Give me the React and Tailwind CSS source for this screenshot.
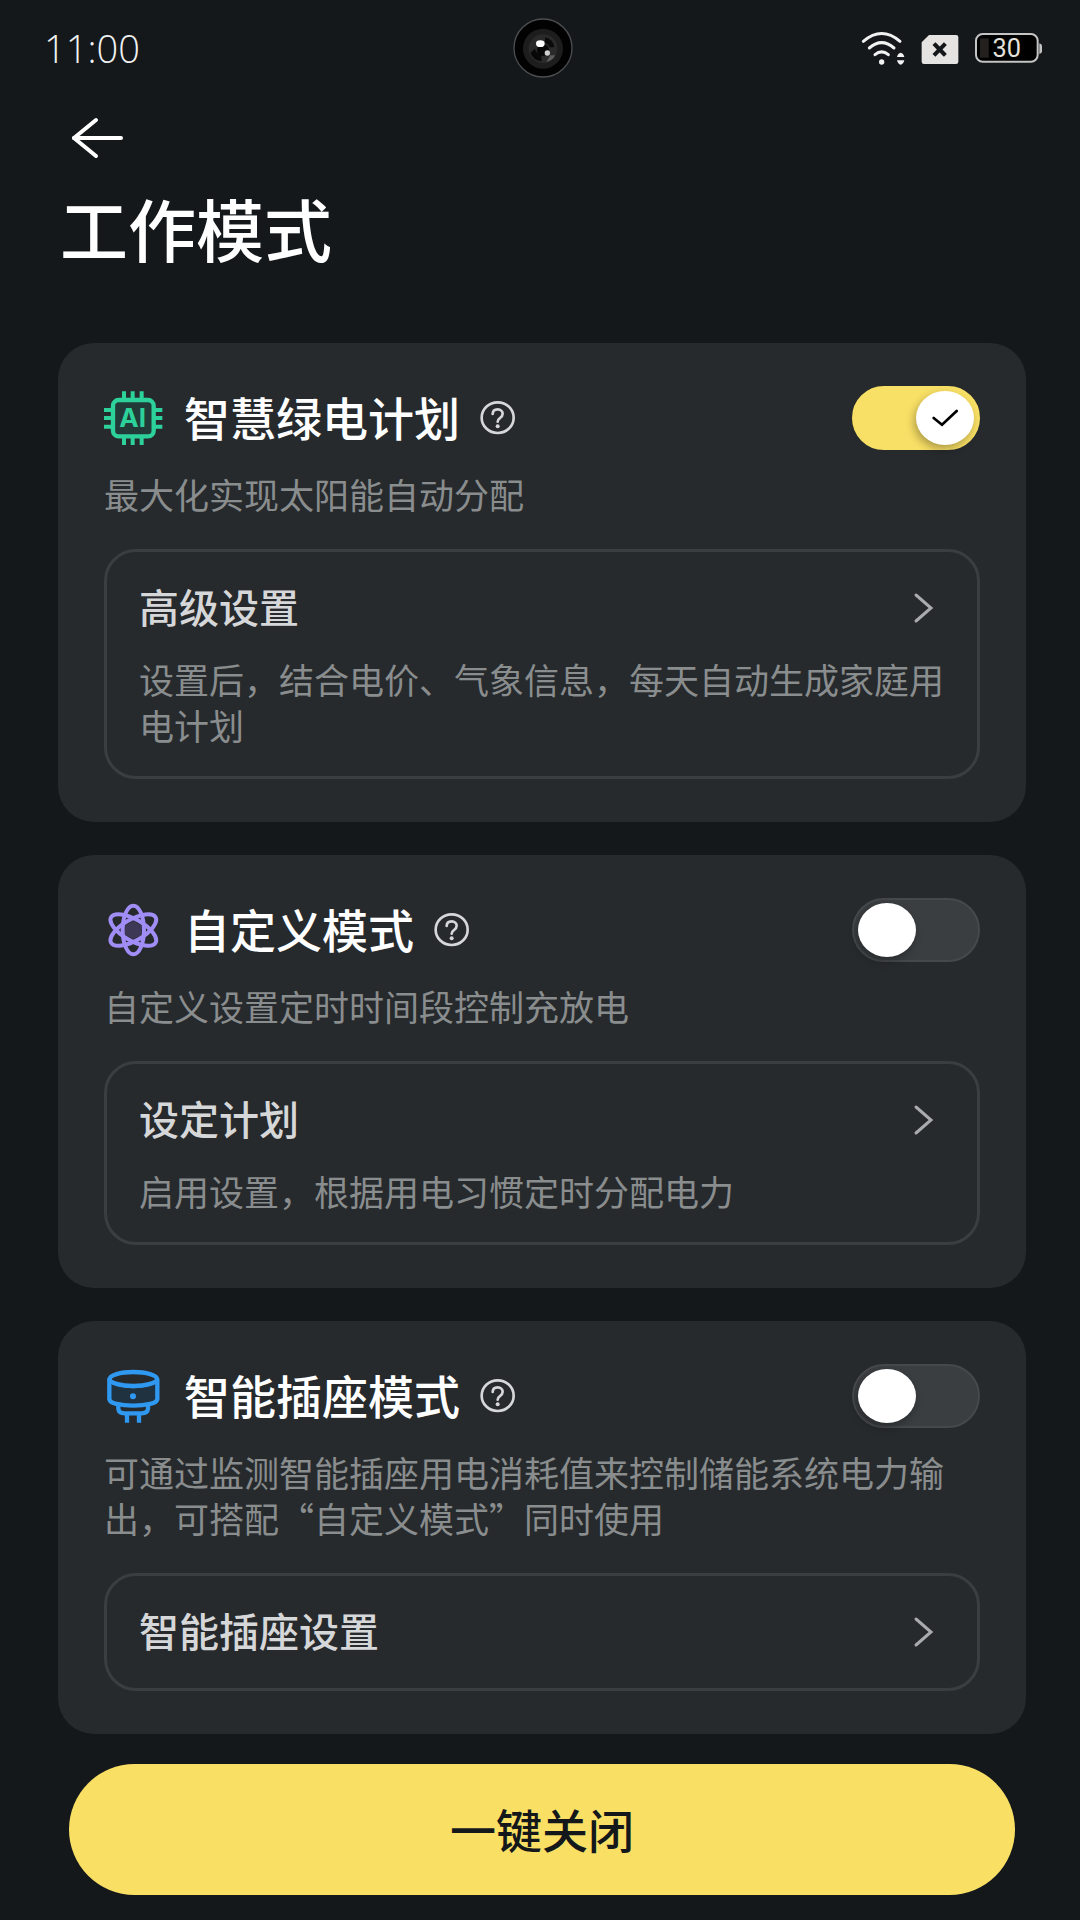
import React, { useState } from 'react';

// ─── Status bar icons ─────────────────────────────────────────────
const WifiIcon = () => (
  <svg viewBox="66 60 132 108" className="w-11 h-9 overflow-visible" fill="none" stroke="#f1f2f2" strokeLinecap="round" aria-hidden="true">
    <path d="M73 94 Q128 47 183 94" strokeWidth="9" />
    <path d="M91 114 Q128 82 165 114" strokeWidth="9" />
    <path d="M108 134 Q128 117 148 134" strokeWidth="9" />
    <circle cx="128" cy="156" r="8" fill="#f1f2f2" stroke="none" />
    <path d="M174 141 Q177 129 185 128 Q193 129 196 141 Z" fill="#f1f2f2" stroke="none" />
    <path d="M174 151 Q177 163 185 164 Q193 163 196 151 Z" fill="#f1f2f2" stroke="none" />
  </svg>
);

const SimIcon = () => (
  <svg viewBox="243 60 114 108" className="w-[38px] h-9" aria-hidden="true">
    <path d="M267 75 H348 Q355 75 355 82 V155 Q355 162 348 162 H252 Q245 162 245 155 V97 Z" fill="#e6e3e3" />
    <path d="M286 105 L312 132 M312 105 L286 132" stroke="#14181b" strokeWidth="12" strokeLinecap="square" />
  </svg>
);

const BatteryIcon = () => (
  <svg viewBox="405 60 201 108" className="w-[67px] h-9" aria-hidden="true">
    <rect x="408" y="72" width="185" height="83" rx="20" fill="#000" stroke="#c4c4c4" strokeWidth="6" />
    <path d="M420 85 H446 V143 H420 Z" fill="#242020" />
    <path d="M598 100 Q606 102 606 108 V124 Q606 130 598 132 Z" fill="#c4c4c4" />
    <text x="500" y="142" textAnchor="middle" fill="#e4e0da" className="font-['Roboto',sans-serif] text-[76px]">30</text>
  </svg>
);

const CameraLens = () => (
  <svg viewBox="0 0 180 180" className="size-[60px]" aria-hidden="true">
    <circle cx="90" cy="90" r="87" fill="#020202" stroke="#4b4e50" strokeWidth="4" />
    <circle cx="90" cy="92" r="60" fill="#1e1d1d" />
    <circle cx="90" cy="92" r="43" fill="#2b2a2a" />
    <path d="M52 104 A40 40 0 0 0 86 130 L84 108 A20 20 0 0 1 66 92 Z" fill="#080808" />
    <path d="M96 58 A36 36 0 0 1 124 88 L110 88 A22 22 0 0 0 96 74 Z" fill="#0a0a0a" />
    <circle cx="90" cy="96" r="18" fill="#070707" />
    <path d="M100 132 Q120 128 126 112 L112 112 Z" fill="#5c5c5c" />
    <ellipse cx="82" cy="77" rx="13" ry="10" fill="#fff" />
    <circle cx="103" cy="105" r="8" fill="#cfcfcf" />
  </svg>
);

// ─── Mode icons ───────────────────────────────────────────────────
const ChipIcon = () => (
  <svg viewBox="42 58 168 168" className="size-14 shrink-0 overflow-visible" aria-hidden="true">
    <rect x="69" y="88" width="122" height="109" rx="17" fill="#233b38" stroke="#2dd29b" strokeWidth="13" />
    <path
      d="M102 62V84 M128 62V84 M155 62V84 M102 201V223 M128 201V223 M155 201V223
         M42 118H65 M42 142H65 M42 168H65 M195 118H217 M195 142H217 M195 168H217"
      stroke="#2dd29b" strokeWidth="12"
    />
    <text x="128" y="170" textAnchor="middle" fill="#2dd29b" className="font-['Inter',sans-serif] text-[78px] font-bold">AI</text>
  </svg>
);

const AtomIcon = () => (
  <svg viewBox="0 0 168 168" className="size-14 shrink-0" aria-hidden="true">
    <path d="M88 57 L113 71 V98 L88 112 L63 98 V71 Z" fill="#3d3856" />
    <g fill="none" stroke="#a08df5" strokeWidth="12">
      <ellipse cx="88" cy="84" rx="32" ry="73" />
      <ellipse cx="88" cy="84" rx="32" ry="77" transform="rotate(60 88 84)" />
      <ellipse cx="88" cy="84" rx="32" ry="77" transform="rotate(120 88 84)" />
    </g>
  </svg>
);

const SocketIcon = () => (
  <svg viewBox="42 54 168 168" className="size-14 shrink-0" fill="none" stroke="#2f98f0" strokeWidth="13" strokeLinejoin="round" aria-hidden="true">
    <path d="M58 88 V148 Q60 157 76 161 Q102 167 130 167 Q158 167 184 161 Q200 157 202 148 V88 Q180 108 130 108 Q80 108 58 88 Z" fill="#20313f" />
    <ellipse cx="130" cy="87" rx="71" ry="21" fill="#262a2d" />
    <path d="M85 168 V176 Q86 190 104 190 H154 Q173 190 174 176 V168" />
    <path d="M111 192 V218 M147 192 V218" />
    <circle cx="129" cy="139" r="9" fill="#2f98f0" stroke="none" />
  </svg>
);

// ─── Small controls ───────────────────────────────────────────────
const HelpButton = ({ label }) => (
  <button type="button" aria-label={label} className="shrink-0 cursor-pointer">
    <svg viewBox="0 0 108 108" className="size-9" fill="none" stroke="#d6d7d8" strokeWidth="8" strokeLinecap="round">
      <ellipse cx="53" cy="53" rx="48" ry="46" />
      <path d="M38 42 C38 33 44 28 53 28 C62 28 68 34 68 41 C68 48 64 51 59 55 C55 58 53 60 53 65" />
      <circle cx="53" cy="79" r="6" fill="#d6d7d8" stroke="none" />
    </svg>
  </button>
);

const Toggle = ({ label, checked, onChange }) => (
  <label className="shrink-0 ml-auto cursor-pointer">
    <input
      type="checkbox"
      role="switch"
      aria-label={label}
      checked={checked}
      onChange={(e) => onChange(e.target.checked)}
      className="sr-only"
    />
    <span
      className={`flex items-center w-32 h-16 px-1 rounded-full border-2 ${
        checked ? 'justify-end bg-[#f8df65] border-[#f8df65]' : 'justify-start bg-[#3a3e40] border-[#46494b]'
      }`}
    >
      <span className="flex items-center justify-center w-[58px] h-[54px] rounded-[50%] bg-white shadow-[-2px_4px_8px_rgba(0,0,0,0.3)]">
        {checked && (
          <svg viewBox="0 0 78 54" className="w-[26px] h-[18px]" fill="none" stroke="#000" strokeWidth="8" strokeLinecap="round" strokeLinejoin="miter" aria-hidden="true">
            <path d="M5 27 L30 47 L74 6" />
          </svg>
        )}
      </span>
    </span>
  </label>
);

const SettingLink = ({ title, desc }) => (
  <button
    type="button"
    className="block w-full mt-8 px-8 py-7 text-left border-[3px] border-[#3a3e40] rounded-[32px] cursor-pointer"
  >
    <span className="flex items-center justify-between">
      <span className="pb-1 text-[40px] leading-[52px] font-medium text-[#d6d7d8]">{title}</span>
      <svg viewBox="0 0 40 40" className="size-10" fill="none" stroke="#a9abac" strokeWidth="3" strokeLinecap="round" aria-hidden="true">
        <path d="M11 7 L26 20 L11 33" />
      </svg>
    </span>
    {desc && <span className="block mt-5 text-[35px] leading-[46px] text-[#8a8d8e]">{desc}</span>}
  </button>
);

const ModeCard = ({ mode, checked, onChange }) => (
  <section className="px-[46px] py-[43px] rounded-[36px] bg-[#262a2d]">
    <div className="flex items-center h-16">
      <mode.icon />
      <h2 className="ml-6 mr-5 pb-1 text-[46px] leading-[60px] font-medium text-white">{mode.title}</h2>
      <HelpButton label={`${mode.title}说明`} />
      <Toggle label={mode.title} checked={checked} onChange={onChange} />
    </div>
    <p className="mt-[21px] pr-5 text-[35px] leading-[46px] text-[#8a8d8e]">{mode.desc}</p>
    <SettingLink title={mode.setting} desc={mode.settingDesc} />
  </section>
);

const modes = [
  {
    id: 'green',
    icon: ChipIcon,
    title: '智慧绿电计划',
    desc: '最大化实现太阳能自动分配',
    setting: '高级设置',
    settingDesc: '设置后，结合电价、气象信息，每天自动生成家庭用电计划',
  },
  {
    id: 'custom',
    icon: AtomIcon,
    title: '自定义模式',
    desc: '自定义设置定时时间段控制充放电',
    setting: '设定计划',
    settingDesc: '启用设置，根据用电习惯定时分配电力',
  },
  {
    id: 'socket',
    icon: SocketIcon,
    title: '智能插座模式',
    desc: '可通过监测智能插座用电消耗值来控制储能系统电力输出，可搭配“自定义模式”同时使用',
    setting: '智能插座设置',
  },
];

// ─── Page ─────────────────────────────────────────────────────────
const App = () => {
  const [enabled, setEnabled] = useState({ green: true, custom: false, socket: false });

  return (
    <div
      lang="zh-CN"
      className="flex flex-col min-h-screen bg-[#14181b] text-white font-['Noto_Sans_CJK_SC',sans-serif]"
    >
      <div className="grid grid-cols-[1fr_auto_1fr] items-center h-24 pl-[44px] pr-[38px]">
        <span className="font-['Open_Sans',sans-serif] font-light text-[38px] leading-[48px] text-[#f1f2f2]">11:00</span>
        <CameraLens />
        <div className="flex items-center justify-end gap-4">
          <WifiIcon />
          <SimIcon />
          <BatteryIcon />
        </div>
      </div>

      <header className="pl-[60px] pr-14">
        <button type="button" aria-label="返回" className="flex items-center h-[84px] px-2 cursor-pointer">
          <svg viewBox="0 0 60 48" className="w-[60px] h-12" fill="none" stroke="#fff" strokeWidth="4" strokeLinecap="round" strokeLinejoin="round" aria-hidden="true">
            <path d="M28 6 L6 24 L28 42" />
            <path d="M6 24 H53" />
          </svg>
        </button>
        <h1 className="mt-2 text-[68px] leading-[80px] font-medium">工作模式</h1>
      </header>

      <main className="flex flex-col gap-[33px] mt-[75px] pl-[58px] pr-[54px]">
        {modes.map((mode) => (
          <ModeCard
            key={mode.id}
            mode={mode}
            checked={enabled[mode.id]}
            onChange={(value) => setEnabled((prev) => ({ ...prev, [mode.id]: value }))}
          />
        ))}
      </main>

      <footer className="pt-[30px] pb-6 pl-[69px] pr-[65px]">
        <button
          type="button"
          onClick={() => setEnabled({ green: false, custom: false, socket: false })}
          className="w-full h-[131px] pb-1 rounded-full bg-[#f9e065] text-[46px] leading-[64px] font-medium text-[#14181b] cursor-pointer"
        >
          一键关闭
        </button>
      </footer>
    </div>
  );
};

export default App;
